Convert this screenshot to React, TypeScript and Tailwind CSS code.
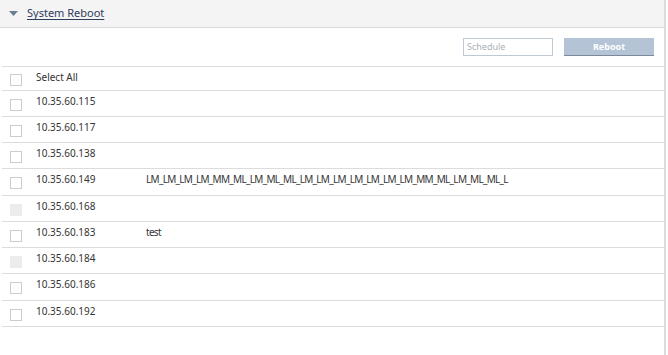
const rows: { ip: string; name?: string; disabled?: boolean }[] = [
  { ip: "10.35.60.115" },
  { ip: "10.35.60.117" },
  { ip: "10.35.60.138" },
  { ip: "10.35.60.149", name: "LM_LM_LM_LM_MM_ML_LM_ML_ML_LM_LM_LM_LM_LM_LM_LM_MM_ML_LM_ML_ML_L" },
  { ip: "10.35.60.168", disabled: true },
  { ip: "10.35.60.183", name: "test" },
  { ip: "10.35.60.184", disabled: true },
  { ip: "10.35.60.186" },
  { ip: "10.35.60.192" },
];

const Check = ({ disabled }: { disabled?: boolean }) => (
  <span
    className={
      disabled
        ? "block w-[12px] h-[12px] bg-[#ececec]"
        : "block w-[12px] h-[12px] border border-[#c9ced4] bg-white"
    }
  />
);

export default function App() {
  return (
    <div
      className="w-[668px] h-[355px] bg-white text-[#333] overflow-hidden"
      style={{ fontFamily: '"Noto Sans", "Open Sans", sans-serif' }}
    >
      <div className="w-[666px] h-full border-r-2 border-[#dcdcdc]">
        {/* header */}
        <div className="h-[28px] bg-[#f4f4f4] border-b border-[#d9d9d9] flex items-center pl-[9px]">
          <svg width="9" height="5" viewBox="0 0 9 5" className="mr-[9px]">
            <path d="M0 0 L9 0 L4.5 5 Z" fill="#6b7c93" />
          </svg>
          <span className="text-[11px] text-[#2f3d5c] underline underline-offset-2">System Reboot</span>
        </div>

        {/* toolbar */}
        <div className="h-[39px] flex items-center justify-end pr-[10px] gap-[11px] border-b border-[#dcdcdc] ml-[2px]">
          <div className="w-[90px] h-[18px] border border-[#bfc9d4] bg-white text-[9px] text-[#aab0b8] pl-[3px] flex items-center">
            Schedule
          </div>
          <button className="w-[90px] h-[18px] bg-[#b5c3d6] border-b border-[#7d8898] text-white text-[9px] font-bold">
            Reboot
          </button>
        </div>

        {/* rows */}
        <div className="ml-[2px]">
          <div className="h-[24px] flex items-center border-b border-[#dcdcdc]">
            <div className="w-[34px] pl-[8px] pt-[2px]">
              <Check />
            </div>
            <span className="text-[10px] -mt-[2px]">Select All</span>
          </div>
          {rows.map((r, i) => (
            <div
              key={r.ip}
              className={
                i % 4 === 3
                  ? "h-[27px] flex items-start border-b border-[#dcdcdc]"
                  : "h-[26px] flex items-start border-b border-[#dcdcdc]"
              }
            >
              <div className="w-[34px] pl-[8px] pt-[8px]">
                <Check disabled={r.disabled} />
              </div>
              <span className="w-[110px] text-[10px] pt-[3px]">{r.ip}</span>
              <span className="text-[10px] pt-[3px] tracking-[-0.7px]">{r.name}</span>
            </div>
          ))}
        </div>
      </div>
    </div>
  );
}
